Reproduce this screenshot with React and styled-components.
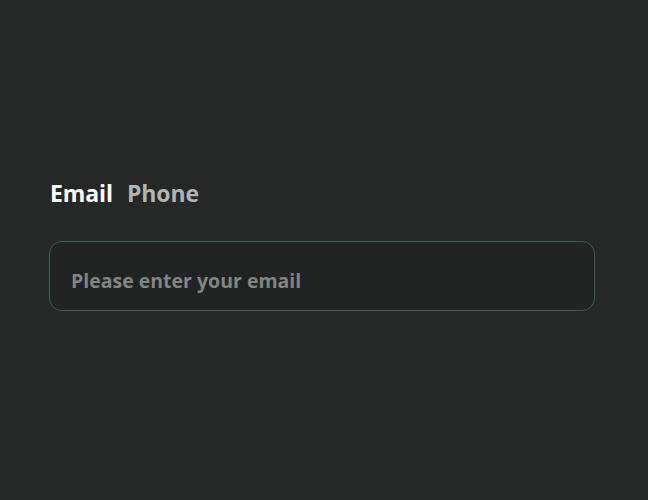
import React, { useState } from 'react';
import styled, { createGlobalStyle } from 'styled-components';

const GlobalStyle = createGlobalStyle`
  html, body {
    margin: 0;
    padding: 0;
    background: #252827;
  }
  body {
    font-family: "Open Sans", "Noto Sans", sans-serif;
  }
`;

const Page = styled.div`
  width: 648px;
  height: 500px;
  box-sizing: border-box;
  padding: 176px 53px 0 49px;
  background: #252827;
`;

const Tabs = styled.div`
  display: flex;
  gap: 14px;
  padding-left: 1px;
  margin-bottom: 31px;
`;

const Tab = styled.button`
  background: none;
  border: 0;
  padding: 0;
  font-family: inherit;
  font-size: 23px;
  font-weight: 700;
  line-height: 34px;
  letter-spacing: -0.1px;
  color: ${(p) => (p.$active ? '#ffffff' : '#b1b6b5')};
  cursor: pointer;
`;

const Field = styled.input`
  display: block;
  width: 100%;
  height: 70px;
  box-sizing: border-box;
  padding: 8px 21px 0;
  border: 1px solid #3e5c50;
  border-radius: 13px;
  background: #212322;
  color: #ffffff;
  font-family: inherit;
  font-size: 19.5px;
  font-weight: 700;
  outline: none;

  &::placeholder {
    color: #818583;
  }
`;

export default function App() {
  const [tab, setTab] = useState('email');
  return (
    <>
      <GlobalStyle />
      <Page>
        <Tabs>
          <Tab $active={tab === 'email'} onClick={() => setTab('email')}>Email</Tab>
          <Tab $active={tab === 'phone'} onClick={() => setTab('phone')}>Phone</Tab>
        </Tabs>
        <Field
          type={tab === 'email' ? 'email' : 'tel'}
          placeholder={tab === 'email' ? 'Please enter your email' : 'Please enter your phone'}
        />
      </Page>
    </>
  );
}
